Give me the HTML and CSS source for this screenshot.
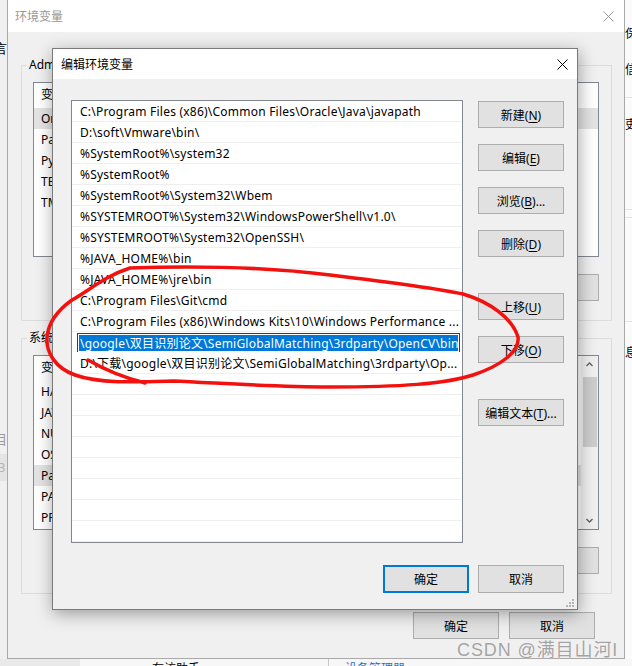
FILE: index.html
```html
<!DOCTYPE html>
<html lang="zh-CN">
<head>
    <meta charset="UTF-8">
    <title>编辑环境变量</title>
    <link rel="stylesheet" href="styles.css">
</head>
<body>
<div class="desktop">
    <!-- bits of the windows lying behind -->
    <div class="behind-left">
        <div class="frag-a">言</div>
        <div class="frag-b">目</div>
        <div class="frag-c">3</div>
    </div>
    <div class="behind-right">
        <div class="side-sec sec-1"><span>保</span><span>信</span></div>
        <div class="side-sec sec-2"><span>吏</span></div>
        <div class="side-sec sec-3"></div>
        <div class="side-sec sec-4"></div>
        <div class="side-sec sec-5"><span>息</span></div>
    </div>

    <div class="window env-window">
        <div class="titlebar">
            <span class="title">环境变量</span>
            <svg class="close" width="11" height="11" viewBox="0 0 11 11"><path d="M0.5 0.5L10.5 10.5M10.5 0.5L0.5 10.5"/></svg>
        </div>
        <div class="env-body">
            <fieldset class="group">
                <legend>Administrator 的用户变量(<u>U</u>)</legend>
                <div class="var-list">
                    <div class="var-rows">
                        <div class="var-head"><span class="name">变量</span><span>值</span></div>
                        <div class="var-row selected"><span class="name">OneDrive</span><span>C:\Users\Administrator\OneDrive</span></div>
                        <div class="var-row"><span class="name">Path</span><span>C:\Users\Administrator\AppData\Local</span></div>
                        <div class="var-row"><span class="name">PyCharm</span><span>D:\soft\PyCharm\bin;</span></div>
                        <div class="var-row"><span class="name">TEMP</span><span>%USERPROFILE%\AppData\Local\Temp</span></div>
                        <div class="var-row"><span class="name">TMP</span><span>%USERPROFILE%\AppData\Local\Temp</span></div>
                    </div>
                </div>
                <div class="group-buttons">
                    <button class="btn">新建(<u>N</u>)...</button>
                    <button class="btn">编辑(<u>E</u>)...</button>
                    <button class="btn">删除(<u>D</u>)</button>
                </div>
            </fieldset>
            <fieldset class="group group-sys">
                <legend>系统变量(<u>S</u>)</legend>
                <div class="var-list">
                    <div class="var-rows">
                        <div class="var-head"><span class="name">变量</span><span>值</span></div>
                        <div class="var-row"><span class="name">HADOOP_HOME</span><span>D:\soft\hadoop</span></div>
                        <div class="var-row"><span class="name">JAVA_HOME</span><span>C:\Program Files\Java\jdk1.8</span></div>
                        <div class="var-row"><span class="name">NUMBER_OF_PROCESSORS</span><span>8</span></div>
                        <div class="var-row"><span class="name">OS</span><span>Windows_NT</span></div>
                        <div class="var-row selected"><span class="name">Path</span><span>C:\Program Files (x86)\Common Files</span></div>
                        <div class="var-row"><span class="name">PATHEXT</span><span>.COM;.EXE;.BAT;.CMD</span></div>
                        <div class="var-row"><span class="name">PROCESSOR_ARCHITECTURE</span><span>AMD64</span></div>
                    </div>
                    <div class="scrollbar">
                        <svg class="arrow" width="17" height="17" viewBox="0 0 17 17"><path d="M5.5 10L8.5 7L11.5 10"/></svg>
                        <div class="track"><div class="thumb"></div></div>
                        <svg class="arrow" width="17" height="17" viewBox="0 0 17 17"><path d="M5.5 7L8.5 10L11.5 7"/></svg>
                    </div>
                </div>
                <div class="group-buttons">
                    <button class="btn">新建(<u>W</u>)...</button>
                    <button class="btn">编辑(<u>I</u>)...</button>
                    <button class="btn">删除(<u>L</u>)</button>
                </div>
            </fieldset>
            <div class="env-footer">
                <button class="btn">确定</button>
                <button class="btn">取消</button>
            </div>
        </div>
    </div>

    <div class="window edit-dialog">
        <div class="titlebar">
            <span class="title">编辑环境变量</span>
            <svg class="close" width="11" height="11" viewBox="0 0 11 11"><path d="M0.5 0.5L10.5 10.5M10.5 0.5L0.5 10.5"/></svg>
        </div>
        <div class="edit-body">
            <div class="edit-main">
                <div class="path-list">
                    <div class="path-row">C:\Program Files (x86)\Common Files\Oracle\Java\javapath</div>
                    <div class="path-row">D:\soft\Vmware\bin\</div>
                    <div class="path-row">%SystemRoot%\system32</div>
                    <div class="path-row">%SystemRoot%</div>
                    <div class="path-row">%SystemRoot%\System32\Wbem</div>
                    <div class="path-row">%SYSTEMROOT%\System32\WindowsPowerShell\v1.0\</div>
                    <div class="path-row">%SYSTEMROOT%\System32\OpenSSH\</div>
                    <div class="path-row">%JAVA_HOME%\bin</div>
                    <div class="path-row">%JAVA_HOME%\jre\bin</div>
                    <div class="path-row">C:\Program Files\Git\cmd</div>
                    <div class="path-row">C:\Program Files (x86)\Windows Kits\10\Windows Performance ...</div>
                    <div class="path-row editing">
                        <div class="path-edit"><span class="sel">\google\双目识别论文\SemiGlobalMatching\3rdparty\OpenCV\bin</span></div>
                    </div>
                    <div class="path-row">D:\下载\google\双目识别论文\SemiGlobalMatching\3rdparty\Op...</div>
                    <div class="path-row"></div>
                    <div class="path-row"></div>
                    <div class="path-row"></div>
                    <div class="path-row"></div>
                    <div class="path-row"></div>
                    <div class="path-row"></div>
                    <div class="path-row"></div>
                    <div class="path-row"></div>
                </div>
                <div class="btn-col">
                    <button class="btn">新建(<u>N</u>)</button>
                    <button class="btn">编辑(<u>E</u>)</button>
                    <button class="btn">浏览(<u>B</u>)...</button>
                    <button class="btn">删除(<u>D</u>)</button>
                    <button class="btn spaced">上移(<u>U</u>)</button>
                    <button class="btn">下移(<u>O</u>)</button>
                    <button class="btn spaced">编辑文本(<u>T</u>)...</button>
                </div>
            </div>
            <div class="edit-footer">
                <button class="btn btn-default">确定</button>
                <button class="btn">取消</button>
            </div>
        </div>
        <svg class="grip" width="9" height="9" viewBox="0 0 9 9">
            <rect x="7" y="1" width="2" height="2"/>
            <rect x="4" y="4" width="2" height="2"/><rect x="7" y="4" width="2" height="2"/>
            <rect x="1" y="7" width="2" height="2"/><rect x="4" y="7" width="2" height="2"/><rect x="7" y="7" width="2" height="2"/>
        </svg>
    </div>

    <!-- red hand drawn mark -->
    <svg class="scribble" width="632" height="666" viewBox="0 0 632 666">
        <path d="M130 268 C180 266 260 266 330 275 C380 281 430 287 463 294 C490 302 512 318 518 337 C520 352 500 366 473 375 C445 384 400 387 330 387 C270 387 220 383 173 381 C140 382 100 384 75 375 C55 368 46 352 47 338 C48 322 58 310 72 300 C90 290 105 276 130 268 M88 360 C100 367 118 376 145 383"/>
    </svg>

    <div class="watermark">CSDN @满目山河I</div>

    <div class="taskbar-strip">
        <div class="strip-left"></div>
        <div class="strip-mid"><span>有访助手</span></div>
        <div class="strip-right"><span>设备管理器</span></div>
    </div>
</div>
</body>
</html>
```

FILE: styles.css
```css
* { box-sizing: border-box; }
body { margin: 0; background: #f0f0f0; color: #000; font-family: "Noto Sans", "Noto Sans CJK SC", sans-serif; font-size: 12px; }
.desktop { position: relative; width: 632px; height: 666px; overflow: hidden; }

/* windows behind */
.behind-left { position: absolute; left: 0; top: 0; width: 8px; height: 666px; background: #f0f0f0; overflow: hidden; }
.behind-left div { margin-left: -6px; font-size: 13px; line-height: 14px; }
.frag-a { margin-top: 41px; }
.frag-b { margin-top: 377px; color: #9a9a9a; }
.frag-c { margin-top: 8px; height: 27px; line-height: 27px !important; background: #e4e4e4; color: #b5b5b5; padding-left: 4px; }
.behind-right { position: absolute; left: 624px; top: 0; width: 8px; height: 666px; background: #fbfbfb; overflow: hidden; }
.side-sec { display: flex; flex-direction: column; border-bottom: 1px solid #e3e3e3; font-size: 12px; line-height: 14px; }
.side-sec span { margin-left: 1px; }
.sec-1 { height: 98px; padding-top: 27px; gap: 22px; }
.sec-2 { height: 112px; padding-top: 20px; }
.sec-3 { height: 8px; }
.sec-4 { height: 104px; }
.sec-5 { height: 6px; border-bottom: 0; }
.sec-5 span { margin-top: 24px; }

/* window frame */
.window { position: absolute; background: #f0f0f0; display: flex; flex-direction: column; }
.titlebar { background: #fff; display: flex; align-items: center; justify-content: space-between; flex-shrink: 0; }
.close path { stroke: #000; stroke-width: 1; fill: none; }

.env-window { left: 7px; top: -1px; width: 618px; height: 660px; border: 1px solid #a9a9a9; }
.env-window .titlebar { height: 32px; padding: 0 10px 0 7px; }
.env-window .title { color: #999; }
.env-window .close path { stroke: #999; }
.env-body { flex: 1; padding: 25px 12px 0 13px; }

.group { margin: 0; padding: 9px 12px 19px 11px; border: 1px solid #dcdcdc; min-width: 0; }
.group legend { padding: 0 2px; margin-left: -6px; line-height: 16px; }
.group-sys { margin-top: 9px; }
.var-list { display: flex; height: 175px; background: #fff; border: 1px solid #828790; }
.var-rows { flex: 1; }
.var-head, .var-row { display: flex; padding-left: 7px; white-space: nowrap; }
.var-head { height: 25px; line-height: 23px; }
.var-row { height: 21px; line-height: 21px; }
.var-row.selected { background: #e3e3e3; }
.var-list .name { width: 170px; }
.scrollbar { width: 17px; background: #f0f0f0; display: flex; flex-direction: column; }
.scrollbar .arrow path { stroke: #606060; stroke-width: 1.3; fill: none; }
.scrollbar .track { flex: 1; padding: 4px 1px 0 2px; }
.scrollbar .thumb { height: 70px; background: #cdcdcd; }
.group-buttons { display: flex; justify-content: flex-end; gap: 9px; margin-top: 17px; }
.env-footer { display: flex; justify-content: flex-end; gap: 10px; margin-top: 18px; padding-right: 17px; }

.btn { width: 86px; height: 27px; padding: 0; background: #e1e1e1; border: 1px solid #adadad; font: inherit; color: #000; }
.btn u { text-decoration-thickness: 1px; text-underline-offset: 2px; }

/* edit dialog */
.edit-dialog { left: 52px; top: 48px; width: 526px; height: 562px; border: 1px solid #7a7a7a; box-shadow: 1px 4px 16px rgba(0, 0, 0, 0.35); }
.edit-dialog .titlebar { height: 30px; padding: 0 9px 0 8px; }
.edit-body { flex: 1; display: flex; flex-direction: column; padding: 21px 13px 16px 18px; }
.edit-main { display: flex; gap: 15px; }
.path-list { width: 392px; height: 443px; background: #fff; border: 1px solid #828790; overflow: hidden; letter-spacing: 0.22px; }
.path-row { height: 21px; border-bottom: 1px solid #efefef; padding: 2px 0 0 8px; line-height: 18px; white-space: nowrap; overflow: hidden; }
.path-row.editing { padding: 1px 2px 0 5px; border-bottom-color: #fff; }
.path-edit { height: 20px; border: 1px solid #3c3c3c; padding: 1px; }
.path-edit .sel { display: block; height: 16px; line-height: 17px; padding-left: 1px; background: #0078d7; color: #fff; white-space: nowrap; overflow: hidden; }
.btn-col { width: 86px; display: flex; flex-direction: column; gap: 16px; padding-top: 1px; }
.btn-col .spaced { margin-top: 20px; }
.edit-footer { display: flex; justify-content: flex-end; gap: 9px; margin-top: 22px; }
.edit-footer .btn { height: 28px; }
.btn-default { border: 2px solid #0078d7; }
.grip { position: absolute; right: 3px; bottom: 2px; }
.grip rect { fill: #b4b4b4; }

/* overlay marks */
.scribble { position: absolute; left: 0; top: 0; pointer-events: none; }
.scribble path { stroke: #f2110f; stroke-width: 3.5; fill: none; stroke-linecap: round; stroke-linejoin: round; }
.watermark { position: absolute; left: 457px; top: 635px; font-family: "Liberation Sans", "Noto Sans CJK SC", sans-serif; font-size: 18px; letter-spacing: 0.9px; color: #a3a3a3; text-shadow: 0 0 1px #fff; white-space: nowrap; }

.taskbar-strip { position: absolute; left: 0; top: 659px; width: 632px; height: 7px; display: flex; overflow: hidden; background: #f7f7f7; }
.strip-left { width: 80px; background: #e9e9e9; }
.strip-mid { width: 249px; border-right: 1px solid #c8c8c8; padding: 3px 0 0 72px; line-height: 14px; }
.strip-right { padding: 3px 0 0 16px; line-height: 14px; color: #2a6fc9; }
```
